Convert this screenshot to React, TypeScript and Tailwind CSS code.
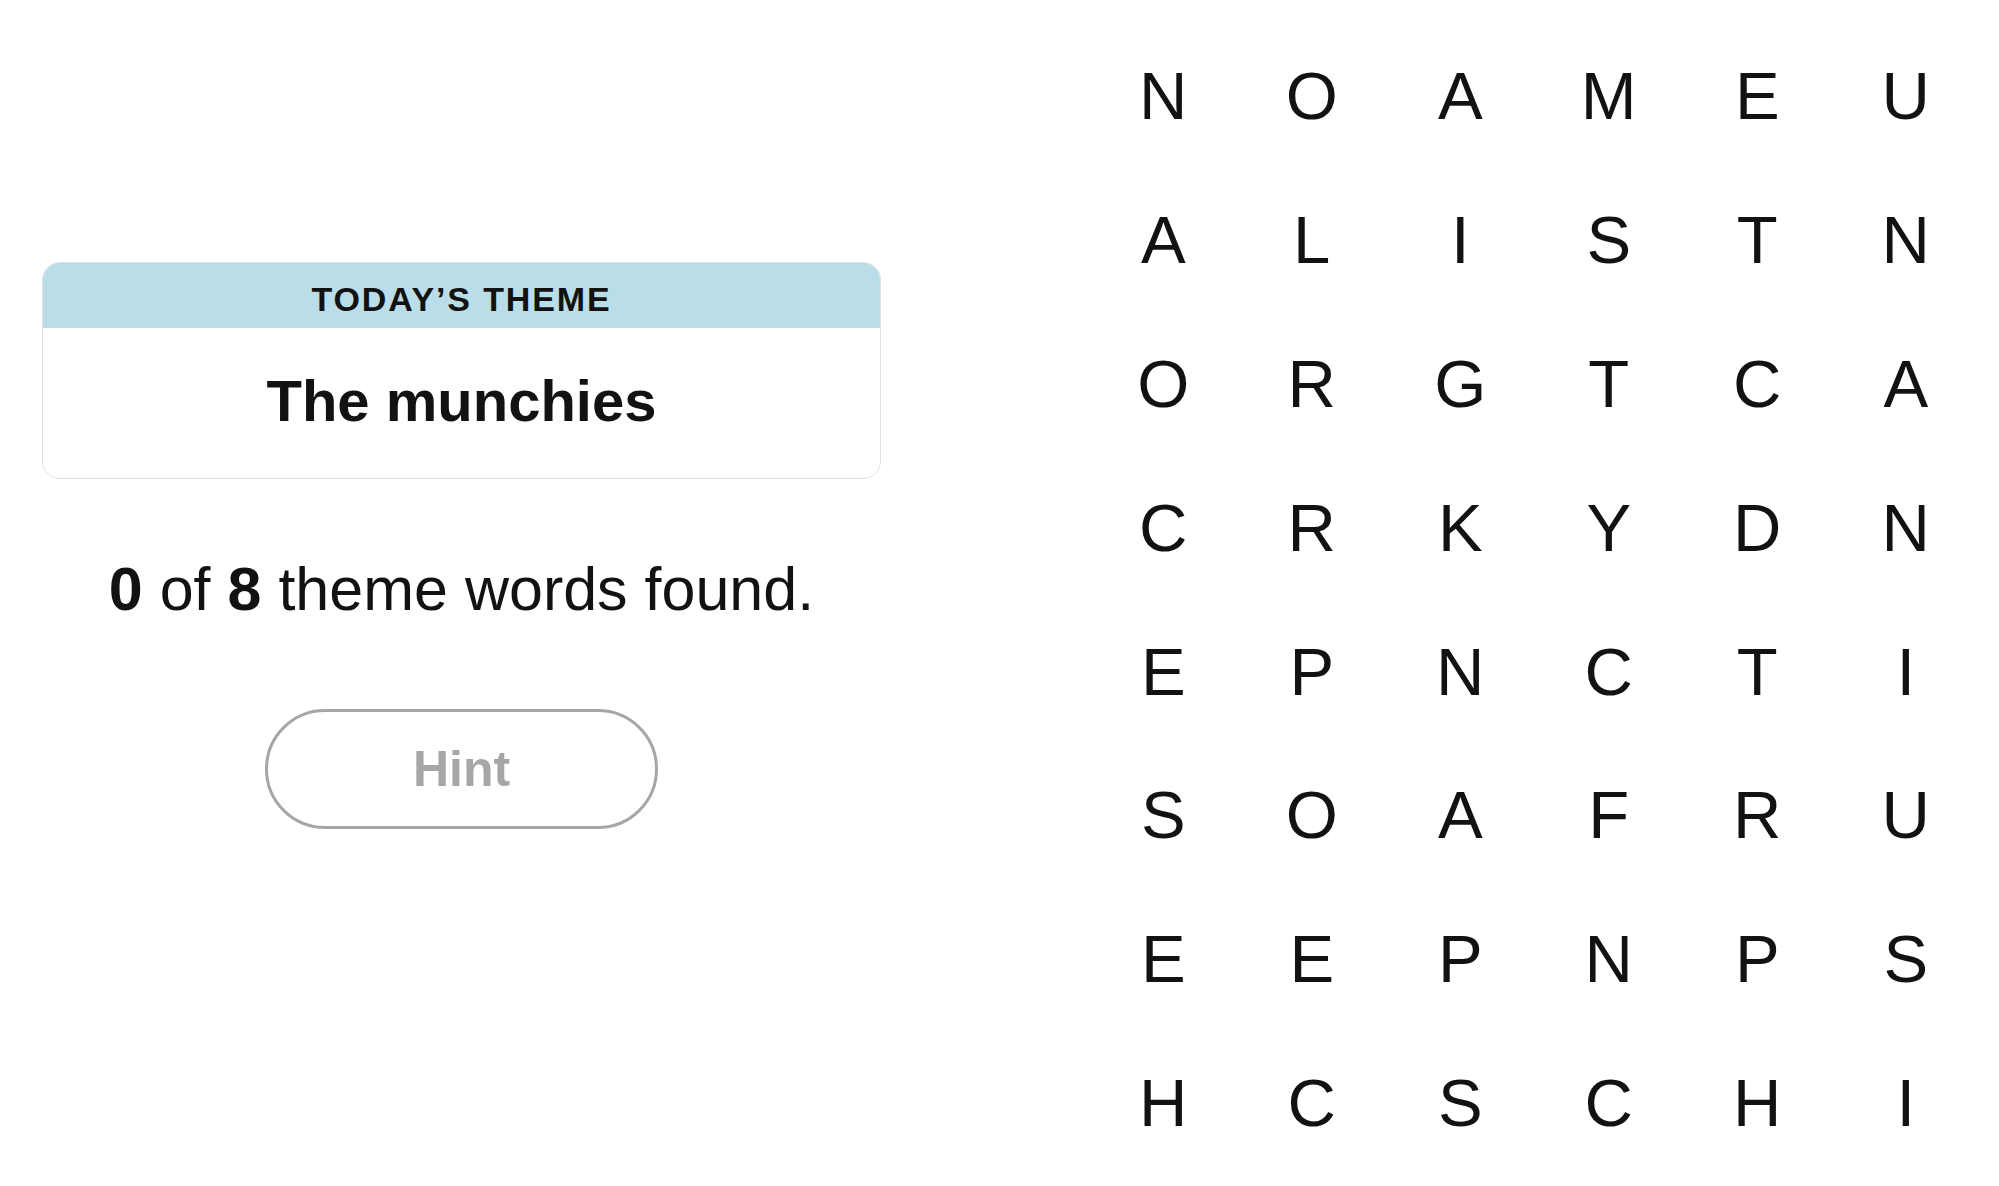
import React from "react";

const ROWS = [
  "NOAMEU",
  "ALISTN",
  "ORGTCA",
  "CRKYDN",
  "EPNCTI",
  "SOAFRU",
  "EEPNPS",
  "HCSCHI",
];

export default function App() {
  return (
    <div
      className="w-[1999px] h-[1186px] bg-white flex overflow-hidden text-[#121212]"
      style={{ fontFamily: '"Liberation Sans", Arial, sans-serif' }}
    >
      <div className="w-[923px] shrink-0 px-[42px] pt-[262px] flex flex-col items-center">
        <div className="w-full rounded-[18px] border border-[#dedede] overflow-hidden">
          <div className="h-[65px] bg-[#b9dde9] flex justify-center pt-[19px]">
            <span className="text-[34px] leading-none font-bold tracking-[0.055em] text-[#121212]">
              TODAY’S THEME
            </span>
          </div>
          <div className="h-[150px] bg-white flex justify-center pt-[44px]">
            <span className="text-[58px] leading-none font-bold text-[#121212]">
              The munchies
            </span>
          </div>
        </div>
        <p className="mt-[80px] text-[61px] leading-none text-[#121212] whitespace-nowrap">
          <span className="font-bold">0</span> of <span className="font-bold">8</span> theme words found.
        </p>
        <button className="mt-[89px] w-[393px] h-[120px] rounded-full border-[3px] border-[#a6a6a6] bg-white flex items-center justify-center">
          <span className="text-[50px] leading-none font-bold text-[#a6a6a6]">Hint</span>
        </button>
      </div>
      <div className="ml-[166px] mt-[23.5px] grid grid-cols-[repeat(6,148.5px)] grid-rows-[repeat(8,143.9px)]">
        {ROWS.flatMap((row, r) =>
          row.split("").map((ch, c) => (
            <div key={`${r}-${c}`} className="flex items-center justify-center">
              <span className="text-[67px] leading-none text-[#121212]">{ch}</span>
            </div>
          ))
        )}
      </div>
    </div>
  );
}
